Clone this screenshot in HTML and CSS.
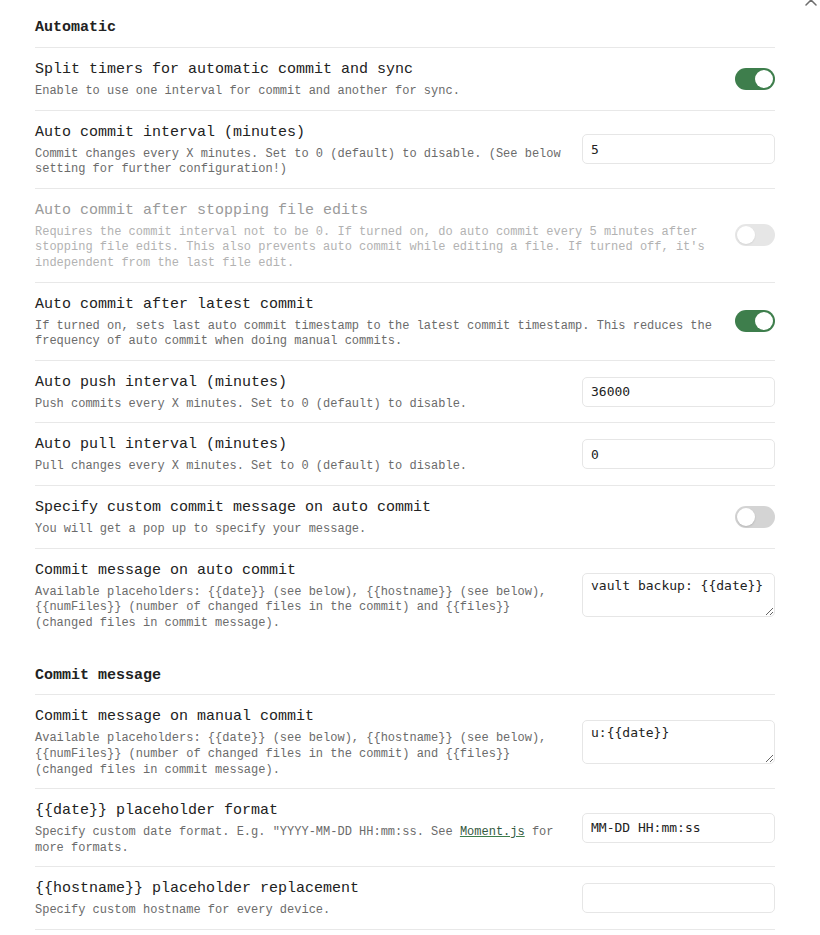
FILE: index.html
```html
<!DOCTYPE html>
<html>
<head>
<meta charset="utf-8">
<link rel="stylesheet" href="styles.css">
</head>
<body>
<svg class="close" width="14" height="14" viewBox="0 0 14 14"><path d="M2 2 L12 12 M12 2 L2 12" stroke="#6e6e6e" stroke-width="1.5" stroke-linecap="round" fill="none"/></svg>
<div class="settings">
  <div class="heading">Automatic</div>

  <div class="item">
    <div class="info">
      <div class="name">Split timers for automatic commit and sync</div>
      <div class="desc">Enable to use one interval for commit and another for sync.</div>
    </div>
    <div class="control"><div class="toggle on"><span class="knob"></span></div></div>
  </div>

  <div class="item">
    <div class="info">
      <div class="name">Auto commit interval (minutes)</div>
      <div class="desc">Commit changes every X minutes. Set to 0 (default) to disable. (See below setting for further configuration!)</div>
    </div>
    <div class="control"><input class="field" type="text" value="5"></div>
  </div>

  <div class="item disabled">
    <div class="info">
      <div class="name">Auto commit after stopping file edits</div>
      <div class="desc">Requires the commit interval not to be 0. If turned on, do auto commit every 5 minutes after stopping file edits. This also prevents auto commit while editing a file. If turned off, it's independent from the last file edit.</div>
    </div>
    <div class="control"><div class="toggle dis"><span class="knob"></span></div></div>
  </div>

  <div class="item">
    <div class="info">
      <div class="name">Auto commit after latest commit</div>
      <div class="desc">If turned on, sets last auto commit timestamp to the latest commit timestamp. This reduces the frequency of auto commit when doing manual commits.</div>
    </div>
    <div class="control"><div class="toggle on"><span class="knob"></span></div></div>
  </div>

  <div class="item">
    <div class="info">
      <div class="name">Auto push interval (minutes)</div>
      <div class="desc">Push commits every X minutes. Set to 0 (default) to disable.</div>
    </div>
    <div class="control"><input class="field" type="text" value="36000"></div>
  </div>

  <div class="item">
    <div class="info">
      <div class="name">Auto pull interval (minutes)</div>
      <div class="desc">Pull changes every X minutes. Set to 0 (default) to disable.</div>
    </div>
    <div class="control"><input class="field" type="text" value="0"></div>
  </div>

  <div class="item">
    <div class="info">
      <div class="name">Specify custom commit message on auto commit</div>
      <div class="desc">You will get a pop up to specify your message.</div>
    </div>
    <div class="control"><div class="toggle off"><span class="knob"></span></div></div>
  </div>

  <div class="item">
    <div class="info">
      <div class="name">Commit message on auto commit</div>
      <div class="desc">Available placeholders: {{date}} (see below), {{hostname}} (see below), {{numFiles}} (number of changed files in the commit) and {{files}} (changed files in commit message).</div>
    </div>
    <div class="control"><textarea class="area">vault backup: {{date}}</textarea></div>
  </div>

  <div class="heading second">Commit message</div>

  <div class="item">
    <div class="info">
      <div class="name">Commit message on manual commit</div>
      <div class="desc">Available placeholders: {{date}} (see below), {{hostname}} (see below), {{numFiles}} (number of changed files in the commit) and {{files}} (changed files in commit message).</div>
    </div>
    <div class="control"><textarea class="area">u:{{date}}</textarea></div>
  </div>

  <div class="item">
    <div class="info">
      <div class="name">{{date}} placeholder format</div>
      <div class="desc">Specify custom date format. E.g. "YYYY-MM-DD HH:mm:ss. See <a class="link" href="#">Moment.js</a> for more formats.</div>
    </div>
    <div class="control"><input class="field" type="text" value="MM-DD HH:mm:ss"></div>
  </div>

  <div class="item">
    <div class="info">
      <div class="name">{{hostname}} placeholder replacement</div>
      <div class="desc">Specify custom hostname for every device.</div>
    </div>
    <div class="control"><input class="field" type="text" value=""></div>
  </div>

  <div class="item end"></div>
</div>
</body>
</html>
```

FILE: styles.css
```css
html, body {
  margin: 0;
  padding: 0;
  background: #ffffff;
}

body {
  position: relative;
  font-family: "Liberation Mono", "DejaVu Sans Mono", monospace;
  color: #222222;
  overflow: hidden;
}

.close {
  position: absolute;
  top: -7px;
  left: 804px;
}

.settings {
  width: 740px;
  padding: 3px 0 0 35px;
}

.heading {
  font-size: 15px;
  font-weight: bold;
  line-height: 20px;
  padding: 15px 0 9px;
  color: #222222;
}

.heading.second {
  margin-top: 10px;
  padding-bottom: 8px;
}

.item {
  display: flex;
  align-items: center;
  gap: 16px;
  border-top: 1px solid #e8e8e8;
  padding: 8px 0;
}

.item.end {
  padding: 0;
  height: 10px;
}

.info {
  flex: 1 1 auto;
  min-width: 0;
  padding-top: 5px;
  padding-bottom: 2px;
}

.name {
  font-size: 15px;
  line-height: 18px;
  color: #222222;
}

.desc {
  font-size: 12px;
  line-height: 15.6px;
  padding-top: 5px;
  color: #6b6b6b;
}

.disabled .name {
  color: #9a9a9a;
}

.disabled .desc {
  color: #b2b2b2;
}

.link {
  color: #35593f;
  text-decoration: underline;
  text-decoration-color: #3e7e4c;
}

.control {
  flex: 0 0 auto;
  display: flex;
  justify-content: flex-end;
}

.toggle {
  position: relative;
  width: 40px;
  height: 22px;
  border-radius: 11px;
  box-sizing: border-box;
}

.toggle .knob {
  position: absolute;
  top: 2px;
  width: 18px;
  height: 18px;
  border-radius: 50%;
  background: #ffffff;
}

.toggle.on {
  background: #3e7e4c;
}

.toggle.on .knob {
  left: 20px;
}

.toggle.off {
  background: #d4d4d4;
}

.toggle.off .knob {
  left: 2px;
  box-shadow: 0 1px 2px rgba(0, 0, 0, 0.15);
}

.toggle.dis {
  background: #e6e6e6;
}

.toggle.dis .knob {
  left: 2px;
  box-shadow: 0 1px 2px rgba(0, 0, 0, 0.08);
}

.field {
  width: 193px;
  height: 30px;
  box-sizing: border-box;
  border: 1px solid #e6e6e6;
  border-radius: 5px;
  padding: 0 8px;
  font-family: "DejaVu Sans Mono", monospace;
  font-size: 13px;
  color: #222222;
  background: #ffffff;
  outline: none;
}

.area {
  width: 193px;
  height: 44px;
  box-sizing: border-box;
  border: 1px solid #e6e6e6;
  border-radius: 5px;
  padding: 4px 8px;
  font-family: "DejaVu Sans Mono", monospace;
  font-size: 13px;
  line-height: 16px;
  color: #222222;
  background: #ffffff;
  resize: vertical;
  outline: none;
  display: block;
}
```
